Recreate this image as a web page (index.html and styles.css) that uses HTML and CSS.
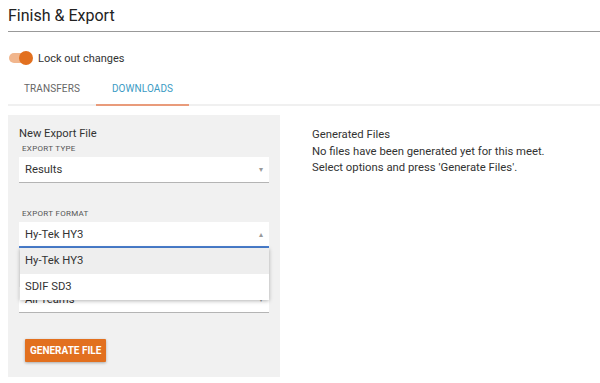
FILE: index.html
```html
<!DOCTYPE html>
<html lang="en">
<head>
  <meta charset="UTF-8">
  <title>Finish &amp; Export</title>
  <link rel="stylesheet" href="styles.css">
</head>
<body>
  <h1 class="page-title">Finish &amp; Export</h1>

  <label class="lock-toggle">
    <span class="switch"><span class="thumb"></span></span>
    <span>Lock out changes</span>
  </label>

  <div class="tabs">
    <div class="tab">Transfers</div>
    <div class="tab active">Downloads</div>
  </div>

  <div class="content">
    <div class="export-panel">
      <div class="panel-title">New Export File</div>

      <div class="field">
        <div class="field-label">Export Type</div>
        <div class="select">
          <span>Results</span>
          <span class="arrow">&#9662;</span>
        </div>
      </div>

      <div class="field">
        <div class="field-label">Export Format</div>
        <div class="select open">
          <span>Hy-Tek HY3</span>
          <span class="arrow">&#9652;</span>
          <ul class="menu">
            <li class="selected">Hy-Tek HY3</li>
            <li>SDIF SD3</li>
          </ul>
        </div>
      </div>

      <div class="field">
        <div class="field-label">Teams</div>
        <div class="select">
          <span>All Teams</span>
          <span class="arrow">&#9662;</span>
        </div>
      </div>

      <button class="generate">Generate File</button>
    </div>

    <div class="generated">
      <div>Generated Files</div>
      <div>No files have been generated yet for this meet.</div>
      <div>Select options and press 'Generate Files'.</div>
    </div>
  </div>
</body>
</html>
```

FILE: styles.css
```css
body {
  font-family: Roboto, 'Liberation Sans', sans-serif;
  color: #333;
  margin: 0;
  padding: 0 0 0 8px;
}

.page-title {
  font-size: 16px;
  font-weight: 400;
  color: #222;
  margin: 0;
  padding: 6px 0 6px;
  border-bottom: 1px solid #999;
}

.lock-toggle {
  display: flex;
  align-items: center;
  gap: 8px;
  margin-top: 18px;
  height: 16px;
  font-size: 11px;
  color: #333;
}

.switch {
  position: relative;
  width: 21px;
  height: 10px;
  margin-left: 1px;
  border-radius: 5px;
  background-color: #f1b68d;
}

.switch .thumb {
  position: absolute;
  right: -3px;
  top: -2px;
  width: 14px;
  height: 14px;
  border-radius: 50%;
  background-color: #e2701f;
}

.tabs {
  display: flex;
  margin-top: 8px;
  border-bottom: 2px solid #f0f0f0;
}

.tab {
  font-size: 10px;
  text-transform: uppercase;
  letter-spacing: 0.1px;
  color: #666;
  padding: 9px 16px 10px;
  border-bottom: 2px solid transparent;
  margin-bottom: -2px;
}

.tab.active {
  color: #3b9bc4;
  border-bottom-color: #e99b7b;
}

.content {
  display: flex;
  margin-top: 9px;
}

.export-panel {
  width: 250px;
  background-color: #f1f1f1;
  padding: 11px 11px 15px;
}

.panel-title {
  font-size: 11.2px;
  line-height: 16px;
}

.field {
  margin-bottom: 26px;
}

.field-label {
  font-size: 8px;
  text-transform: uppercase;
  letter-spacing: 0.3px;
  color: #555;
  margin: 2px 0 4px 3px;
}

.select {
  position: relative;
  display: flex;
  justify-content: space-between;
  align-items: center;
  height: 25px;
  padding: 0 6px;
  background-color: #fff;
  border-bottom: 1px solid #b4b4b4;
  font-size: 11.3px;
}

.select.open {
  border-bottom: 2px solid #4a7fd0;
  height: 24px;
}

.arrow {
  font-size: 8px;
  color: #999;
}

.menu {
  position: absolute;
  left: 1px;
  right: 0;
  top: 26px;
  margin: 0;
  padding: 0;
  list-style: none;
  background-color: #fff;
  box-shadow: 0 1px 4px rgba(0, 0, 0, 0.3);
  z-index: 2;
}

.menu li {
  height: 26px;
  line-height: 26px;
  padding: 0 5px;
}

.menu li.selected {
  background-color: #eee;
}

.generate {
  display: block;
  margin: 3px 0 0 6px;
  padding: 0 5px;
  height: 23px;
  background-color: #e2701f;
  color: #fff;
  border: none;
  border-radius: 1px;
  font-family: Roboto, 'Liberation Sans', sans-serif;
  font-size: 10px;
  font-weight: 700;
  text-transform: uppercase;
  box-shadow: 0 1px 3px rgba(0, 0, 0, 0.3);
}

.generated {
  margin-left: 32px;
  padding-top: 12px;
  font-size: 11.3px;
  line-height: 16.5px;
  color: #333;
}
```
